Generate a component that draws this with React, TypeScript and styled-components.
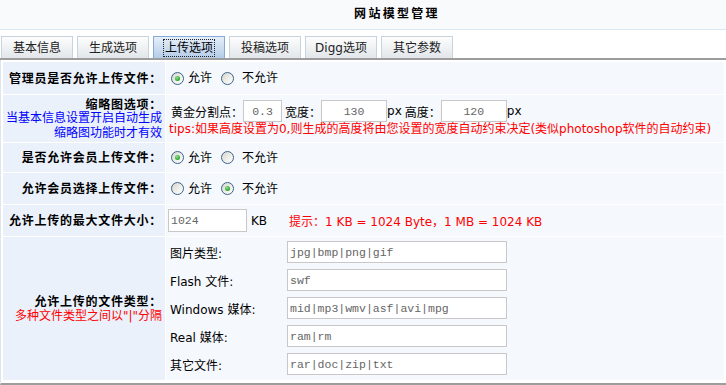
import React from "react";
import styled, { createGlobalStyle, css } from "styled-components";

const GlobalStyle = createGlobalStyle`
  html, body {
    margin: 0;
    padding: 0;
    background: #ffffff;
  }
  body {
    font-family: "DejaVu Sans", "Noto Sans CJK SC", sans-serif;
    font-size: 12px;
    color: #000;
  }
  * {
    box-sizing: border-box;
  }
`;

const Page = styled.div`
  width: 726px;
  height: 385px;
  overflow: hidden;
`;

// title bar
const Header = styled.div`
  height: 30px;
  background: #f8fafc;
  border-bottom: 1px solid #d9e5f1;
  display: flex;
  justify-content: center;
  align-items: flex-start;
  padding: 6px 0 0 68px;
`;

const Title = styled.h1`
  margin: 0;
  font-family: "Noto Sans CJK SC", sans-serif;
  font-size: 12px;
  line-height: 14px;
  font-weight: 700;
  letter-spacing: 2.3px;
`;

// tabs
const TabBar = styled.div`
  display: flex;
  gap: 4px;
  height: 30px;
  padding: 6px 0 0 1px;
  border-bottom: 2px solid #9d9d9d;
`;

const Tab = styled.div<{ $active?: boolean }>`
  width: 72px;
  height: 22px;
  border: 1px solid #c7d3df;
  border-bottom: none;
  background: linear-gradient(#fdfdfd, #e2e6ea);
  color: #222;
  display: flex;
  align-items: center;
  justify-content: center;
  line-height: 14px;

  ${(p) =>
    p.$active &&
    css`
      border-color: #85aad6;
      background: linear-gradient(#e6eff9, #b4cce9);
      color: #000;
    `}
`;

const TabFocus = styled.span`
  border: 1px dotted #222;
  padding: 1px 1px;
`;

// form table
const Form = styled.div`
  display: flex;
  flex-direction: column;
  gap: 1px;
  padding: 2px 2px 3px 2px;
  border-left: 1px solid #dfe5ec;
  border-bottom: 2px solid #9d9d9d;
  background: #ffffff;
`;

const Row = styled.div<{ $h: number }>`
  display: grid;
  grid-template-columns: 162px 1fr;
  column-gap: 1px;
  height: ${(p) => p.$h}px;
`;

const LabelCell = styled.div`
  background: #eaf1fb;
  display: flex;
  flex-direction: column;
  justify-content: center;
  align-items: flex-end;
  text-align: right;
  padding-right: 3px;
  line-height: 14.5px;
`;

const FieldName = styled.div`
  font-family: "Noto Sans CJK SC", sans-serif;
  font-weight: 700;
  letter-spacing: 0.75px;
`;

const Note = styled.div<{ $color: string }>`
  color: ${(p) => p.$color};
  white-space: nowrap;
`;

const ValueCell = styled.div<{ $top?: boolean }>`
  background: #f5f8fd;
  display: flex;
  flex-direction: column;
  justify-content: ${(p) => (p.$top ? "flex-start" : "center")};
  padding-left: 2px;
`;

// radios
const RadioGroup = styled.div`
  display: flex;
  align-items: center;
  gap: 9px;
  padding-left: 3px;
`;

const Option = styled.span<{ $gap: number }>`
  display: inline-flex;
  align-items: center;
  gap: ${(p) => p.$gap}px;
  line-height: 16px;
`;

const RadioDot = styled.span<{ $checked?: boolean }>`
  position: relative;
  flex: none;
  width: 13px;
  height: 13px;
  border-radius: 50%;
  border: 1px solid #3b628b;
  background: linear-gradient(135deg, #d6d6d0 0%, #efefea 55%, #ffffff 100%);

  ${(p) =>
    p.$checked &&
    css`
      &::after {
        content: "";
        position: absolute;
        left: 3px;
        top: 3px;
        width: 5px;
        height: 5px;
        border-radius: 50%;
        background: radial-gradient(circle at 40% 35%, #8fe08f, #1f9e1f 75%);
      }
    `}
`;

// inputs
const TextBox = styled.input<{ $w: number; $h?: number; $center?: boolean }>`
  flex: none;
  width: ${(p) => p.$w}px;
  height: ${(p) => p.$h ?? 22}px;
  margin: 0;
  padding: 0 2px;
  border: 1px solid #c8c8c8;
  background: #ffffff;
  font-family: "Liberation Mono", monospace;
  font-size: 11.5px;
  color: #666;
  text-align: ${(p) => (p.$center ? "center" : "left")};
  outline: none;
`;

const InlineLine = styled.div<{ $pad?: number; $h?: number }>`
  display: flex;
  align-items: center;
  height: ${(p) => p.$h ?? 22}px;
  padding-left: ${(p) => p.$pad ?? 3}px;
`;

const Text = styled.span<{ $ml?: number }>`
  margin-left: ${(p) => p.$ml ?? 0}px;
  white-space: nowrap;
`;

const Tips = styled.div`
  color: #ff0000;
  line-height: 15px;
  padding-left: 1px;
  white-space: nowrap;
`;

const Hint = styled.span`
  margin-left: 22px;
  color: #ff0000;
  white-space: nowrap;
`;

const TypeGrid = styled.div`
  display: grid;
  grid-template-columns: 117px 220px;
  grid-auto-rows: 22px;
  row-gap: 6px;
  align-items: center;
  padding: 4px 0 0 2px;
`;

const tabs = ["基本信息", "生成选项", "上传选项", "投稿选项", "Digg选项", "其它参数"];

const fileTypes = [
  { label: "图片类型:", value: "jpg|bmp|png|gif" },
  { label: "Flash 文件:", value: "swf" },
  { label: "Windows 媒体:", value: "mid|mp3|wmv|asf|avi|mpg" },
  { label: "Real 媒体:", value: "ram|rm" },
  { label: "其它文件:", value: "rar|doc|zip|txt" },
];

const YesNo: React.FC<{ yes: boolean }> = ({ yes }) => (
  <RadioGroup>
    <Option $gap={4}>
      <RadioDot $checked={yes} />
      允许
    </Option>
    <Option $gap={8}>
      <RadioDot $checked={!yes} />
      不允许
    </Option>
  </RadioGroup>
);

export default function App() {
  return (
    <Page>
      <GlobalStyle />
      <Header>
        <Title>网站模型管理</Title>
      </Header>

      <TabBar>
        {tabs.map((t) => (
          <Tab key={t} $active={t === "上传选项"}>
            {t === "上传选项" ? <TabFocus>{t}</TabFocus> : t}
          </Tab>
        ))}
      </TabBar>

      <Form>
        <Row $h={32}>
          <LabelCell>
            <FieldName>管理员是否允许上传文件：</FieldName>
          </LabelCell>
          <ValueCell>
            <YesNo yes />
          </ValueCell>
        </Row>

        <Row $h={47}>
          <LabelCell>
            <FieldName>缩略图选项：</FieldName>
            <Note $color="#0000ff">当基本信息设置开启自动生成</Note>
            <Note $color="#0000ff">缩略图功能时才有效</Note>
          </LabelCell>
          <ValueCell>
            <InlineLine>
              <Text>黄金分割点：</Text>
              <TextBox $w={39} $center readOnly defaultValue="0.3" />
              <Text $ml={3}>宽度：</Text>
              <TextBox $w={66} $center readOnly defaultValue="130" />
              <Text>px</Text>
              <Text $ml={3}>高度：</Text>
              <TextBox $w={66} $center readOnly defaultValue="120" />
              <Text>px</Text>
            </InlineLine>
            <Tips>tips:如果高度设置为0,则生成的高度将由您设置的宽度自动约束决定(类似photoshop软件的自动约束)</Tips>
          </ValueCell>
        </Row>

        <Row $h={29}>
          <LabelCell>
            <FieldName>是否允许会员上传文件：</FieldName>
          </LabelCell>
          <ValueCell>
            <YesNo yes />
          </ValueCell>
        </Row>

        <Row $h={31}>
          <LabelCell>
            <FieldName>允许会员选择上传文件：</FieldName>
          </LabelCell>
          <ValueCell>
            <YesNo yes={false} />
          </ValueCell>
        </Row>

        <Row $h={31}>
          <LabelCell>
            <FieldName>允许上传的最大文件大小：</FieldName>
          </LabelCell>
          <ValueCell>
            <InlineLine $pad={0} $h={23}>
              <TextBox $w={79} $h={23} readOnly defaultValue="1024" />
              <Text $ml={4}>KB</Text>
              <Hint>提示：1 KB = 1024 Byte，1 MB = 1024 KB</Hint>
            </InlineLine>
          </ValueCell>
        </Row>

        <Row $h={143}>
          <LabelCell>
            <FieldName>允许上传的文件类型：</FieldName>
            <Note $color="#ff0000">多种文件类型之间以"|"分隔</Note>
          </LabelCell>
          <ValueCell $top>
            <TypeGrid>
              {fileTypes.map((f) => (
                <React.Fragment key={f.label}>
                  <Text>{f.label}</Text>
                  <TextBox $w={220} readOnly defaultValue={f.value} />
                </React.Fragment>
              ))}
            </TypeGrid>
          </ValueCell>
        </Row>
      </Form>
    </Page>
  );
}
